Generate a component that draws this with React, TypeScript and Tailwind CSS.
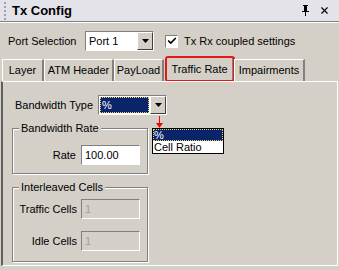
import { Check, X } from "lucide-react";

const font = { fontFamily: '"Liberation Sans", Arial, sans-serif' };

function Combo({ value, w, selected }: { value: string; w: number; selected?: boolean }) {
  return (
    <div
      className="flex h-[20px] border border-t-[#808080] border-l-[#808080] border-b-white border-r-white bg-white"
      style={{ width: w }}
    >
      <div className="flex-1 p-[1px]">
        <div
          className={`h-full pl-[2px] leading-[16px] ${
            selected ? "bg-[#0a246a] text-white outline-1 outline-dotted outline-[#e8d060] -outline-offset-1" : "text-black"
          }`}
        >
          {value}
        </div>
      </div>
      <div className="w-[16px] h-[18px] bg-[#d4d0c8] border border-t-white border-l-white border-b-[#404040] border-r-[#404040] flex items-center justify-center">
        <svg width="7" height="4" viewBox="0 0 7 4">
          <path d="M0 0h7L3.5 4z" fill="#000" />
        </svg>
      </div>
    </div>
  );
}

function Field({ value, disabled }: { value: string; disabled?: boolean }) {
  return (
    <div
      className={`w-[59px] h-[20px] border border-t-[#808080] border-l-[#808080] border-b-white border-r-white pl-[3px] leading-[18px] ${
        disabled ? "bg-[#d4d0c8] text-[#a0a0a0]" : "bg-white text-black"
      }`}
    >
      {value}
    </div>
  );
}

function Group({ title, children, h }: { title: string; children: React.ReactNode; h: number }) {
  return (
    <div className="relative w-[136px] border border-[#808080] shadow-[inset_1px_1px_0_white,1px_1px_0_white]" style={{ height: h }}>
      <span className="absolute -top-[8px] left-[6px] bg-[#d4d0c8] px-[2px] leading-[14px] whitespace-nowrap">{title}</span>
      {children}
    </div>
  );
}

function Tab({ label, w, active }: { label: string; w: number; active?: boolean }) {
  return (
    <div
      className={`whitespace-nowrap text-center border-t border-l border-white border-r-2 border-r-[#808080] ${
        active
          ? "h-[24px] leading-[22px] outline-2 outline-[#e0191c] rounded-[2px] -outline-offset-1"
          : "h-[22px] leading-[20px]"
      }`}
      style={{ width: w }}
    >
      {label}
    </div>
  );
}

export default function App() {
  return (
    <div className="w-[339px] h-[270px] bg-[#d4d0c8] text-[11px] text-black overflow-hidden flex flex-col" style={font}>
      {/* title bar */}
      <div className="h-[22px] bg-[#e4e3e9] flex items-center border-b border-[#808080]">
        <div className="ml-[4px] flex flex-col gap-[2px]">
          {[0, 1, 2, 3, 4].map((i) => (
            <div key={i} className="w-[2px] h-[2px] bg-[#a0a0a8]" />
          ))}
        </div>
        <span className="ml-[6px] font-bold text-[13px]">Tx Config</span>
        <div className="ml-auto mr-[9px] flex items-center gap-[9px]">
          <svg width="9" height="11" viewBox="0 0 9 11">
            <path d="M2 0h5v1H6v5h2v1H5v4H4V7H1V6h2V1H2z" fill="#000" />
          </svg>
          <X size={11} strokeWidth={2.5} />
        </div>
      </div>
      <div className="h-px bg-white" />

      {/* port row */}
      <div className="flex items-center h-[22px] mt-[7px] pl-[8px] whitespace-nowrap">
        <span className="w-[77px]">Port Selection</span>
        <Combo value="Port 1" w={69} />
        <div className="ml-[11px] w-[13px] h-[13px] bg-white border border-t-[#808080] border-l-[#808080] border-b-white border-r-white flex items-center justify-center">
          <Check size={10} strokeWidth={4} />
        </div>
        <span className="ml-[6px]">Tx Rx coupled settings</span>
      </div>

      {/* tabs */}
      <div className="flex items-end h-[25px] mt-[4px] pl-[2px]">
        <Tab label="Layer" w={42} />
        <Tab label="ATM Header" w={70} />
        <Tab label="PayLoad" w={50} />
        <div className="w-[2px]" />
        <Tab label="Traffic Rate" w={68} active />
        <Tab label="Impairments" w={71} />
      </div>

      {/* panel */}
      <div className="relative flex-1 mx-[1px] mb-[4px] border-l-2 border-l-[#606060] border-t border-t-white border-r border-r-white border-b border-b-white pl-[9px] pt-[13px]">
        <div className="flex items-center h-[20px] pl-[3px] whitespace-nowrap">
          <span className="w-[83px]">Bandwidth Type</span>
          <Combo value="%" w={69} selected />
        </div>

        <div className="mt-[13px]">
          <Group title="Bandwidth Rate" h={46}>
            <div className="flex items-center justify-end pr-[7px] mt-[16px] gap-[5px]">
              <span>Rate</span>
              <Field value="100.00" />
            </div>
          </Group>
        </div>

        <div className="mt-[13px]">
          <Group title="Interleaved Cells" h={75}>
            <div className="flex flex-col items-end pr-[7px] mt-[11px] gap-[12px]">
              <div className="flex items-center gap-[4px] whitespace-nowrap">
                <span>Traffic Cells</span>
                <Field value="1" disabled />
              </div>
              <div className="flex items-center gap-[4px] whitespace-nowrap">
                <span>Idle Cells</span>
                <Field value="1" disabled />
              </div>
            </div>
          </Group>
        </div>

        {/* red arrow + open list */}
        <div className="absolute left-[153px] top-[34px] flex flex-col items-center">
          <div className="w-px h-[7px] bg-[#ff0000]" />
          <svg width="7" height="5" viewBox="0 0 7 5">
            <path d="M0 0h7L3.5 5z" fill="#ff0000" />
          </svg>
        </div>
        <div className="absolute left-[149px] top-[46px] w-[72px] bg-white border border-black whitespace-nowrap">
          <div className="bg-[#0a246a] text-white pl-[1px] leading-[12px] h-[12px] outline-1 outline-dotted outline-[#e8d060] -outline-offset-1">%</div>
          <div className="pl-[1px] leading-[12px] h-[12px]">Cell Ratio</div>
        </div>
      </div>
    </div>
  );
}
